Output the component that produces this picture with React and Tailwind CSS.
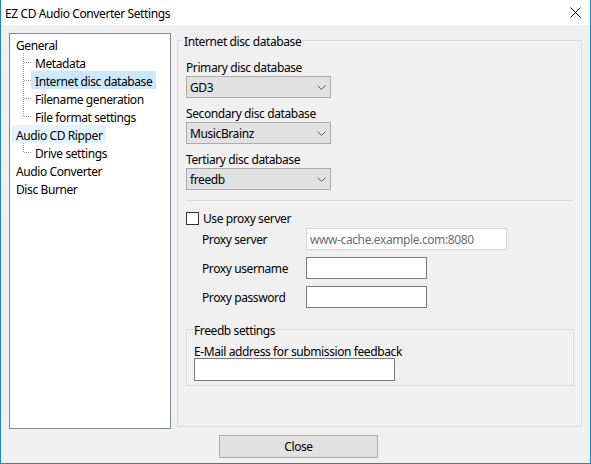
import React from 'react';

const treeItems = [
  { label: 'General', level: 0 },
  { label: 'Metadata', level: 1 },
  { label: 'Internet disc database', level: 1, selected: true },
  { label: 'Filename generation', level: 1 },
  { label: 'File format settings', level: 1, last: true },
  { label: 'Audio CD Ripper', level: 0, hot: true },
  { label: 'Drive settings', level: 1, last: true },
  { label: 'Audio Converter', level: 0 },
  { label: 'Disc Burner', level: 0 },
];

// dotted connector for child nodes
const Connector = ({ last }) => (
  <svg width="19" height="18" className="shrink-0">
    <line x1="11.5" y1="0" x2="11.5" y2={last ? 9 : 18} stroke="#a0a0a0" strokeDasharray="1 1" />
    <line x1="12" y1="9.5" x2="19" y2="9.5" stroke="#a0a0a0" strokeDasharray="1 1" />
  </svg>
);

const TreeRow = ({ item }) => {
  const bg = item.selected ? 'bg-[#cce8ff]' : item.hot ? 'bg-[#e5f3ff]' : '';
  return (
    <div className="flex h-[18px] items-center pl-[2px]">
      {item.level === 1 && <Connector last={item.last} />}
      <span className={`h-[18px] whitespace-nowrap px-[4px] pt-[4px] leading-[14px] ${bg}`}>{item.label}</span>
    </div>
  );
};

const Label = ({ children, className = '' }) => (
  <div className={`h-[16px] pt-[4px] leading-[12px] ${className}`}>{children}</div>
);

const Legend = ({ children, className = '' }) => (
  <legend className={`px-[1px] ${className}`}>
    <span className="block h-[16px] pt-[4px] leading-[12px]">{children}</span>
  </legend>
);

const Combo = ({ value }) => (
  <div className="mt-[2px] flex h-[22px] w-[145px] items-center justify-between border border-[#adadad] bg-[#e1e1e1] pl-[3px] pr-[4px]">
    <span className="pt-[2px]">{value}</span>
    <svg width="9" height="5" viewBox="0 0 9 5">
      <path d="M0.5 0.5 L4.5 4.5 L8.5 0.5" fill="none" stroke="#606060" strokeWidth="1" />
    </svg>
  </div>
);

const ProxyRow = ({ label, value, disabled, width }) => (
  <div className="mt-[7px] flex h-[22px] items-center first:mt-[2px]">
    <span className="w-[120px] pl-[16px] pt-[2px]">{label}</span>
    <div
      className={`flex h-[22px] items-center border bg-white pl-[3px] ${width} ${
        disabled ? 'border-[#d4d4d4] text-[#6d6d6d]' : 'border-[#7a7a7a]'
      }`}
    >
      <span className="pt-[2px]">{value}</span>
    </div>
  </div>
);

export default function App() {
  return (
    <div className="flex h-[464px] w-[591px] flex-col border-x border-b border-[#1883d7] bg-[#f0f0f0] font-['Noto_Sans',sans-serif] text-[12px] tracking-[-0.4px] text-black">
      {/* Title bar */}
      <div className="flex h-[25px] shrink-0 items-center justify-between bg-white pl-[4px] pr-[9px]">
        <span className="pt-[2px]">EZ CD Audio Converter Settings</span>
        <svg width="11" height="11" viewBox="0 0 11 11">
          <path d="M0.5 0.5 L10.5 10.5 M10.5 0.5 L0.5 10.5" stroke="#000" strokeWidth="1" />
        </svg>
      </div>

      <div className="flex items-start gap-[6px] pl-[8px] pt-[8px]">
        {/* Tree */}
        <div className="h-[396px] w-[162px] shrink-0 border border-[#828790] bg-white pt-[1px]">
          {treeItems.map((item) => (
            <TreeRow key={item.label} item={item} />
          ))}
        </div>

        {/* Internet disc database group */}
        <fieldset className="-mt-[1px] h-[395px] w-[405px] border border-[#dcdcdc] pl-[8px]">
          <Legend className="-ml-[3px]">Internet disc database</Legend>

          <Label className="mt-[10px]">Primary disc database</Label>
          <Combo value="GD3" />
          <Label className="mt-[6px]">Secondary disc database</Label>
          <Combo value="MusicBrainz" />
          <Label className="mt-[6px]">Tertiary disc database</Label>
          <Combo value="freedb" />

          <div className="mt-[10px] h-px w-[387px] bg-[#dcdcdc]" />

          <div className="mt-[9px] flex h-[16px] items-center">
            <div className="h-[13px] w-[13px] border border-[#333333] bg-white" />
            <span className="ml-[4px] pt-[2px]">Use proxy server</span>
          </div>

          <div>
            <ProxyRow label="Proxy server" value="www-cache.example.com:8080" disabled width="w-[201px]" />
            <ProxyRow label="Proxy username" width="w-[121px]" />
            <ProxyRow label="Proxy password" width="w-[121px]" />
          </div>

          {/* Freedb settings group */}
          <fieldset className="mt-[13px] w-[388px] border border-[#dcdcdc] pb-[4px] pl-[7px]">
            <Legend className="-ml-[1px]">Freedb settings</Legend>
            <Label className="mt-[5px]">E-Mail address for submission feedback</Label>
            <div className="h-[23px] w-[201px] border border-[#7a7a7a] bg-white" />
          </fieldset>
        </fieldset>
      </div>

      <div className="pl-[218px] pt-[6px]">
        <button className="h-[23px] w-[159px] border border-[#adadad] bg-[#e1e1e1] pt-[1px] font-['Noto_Sans',sans-serif] text-[12px] tracking-[-0.4px]">
          Close
        </button>
      </div>
    </div>
  );
}
